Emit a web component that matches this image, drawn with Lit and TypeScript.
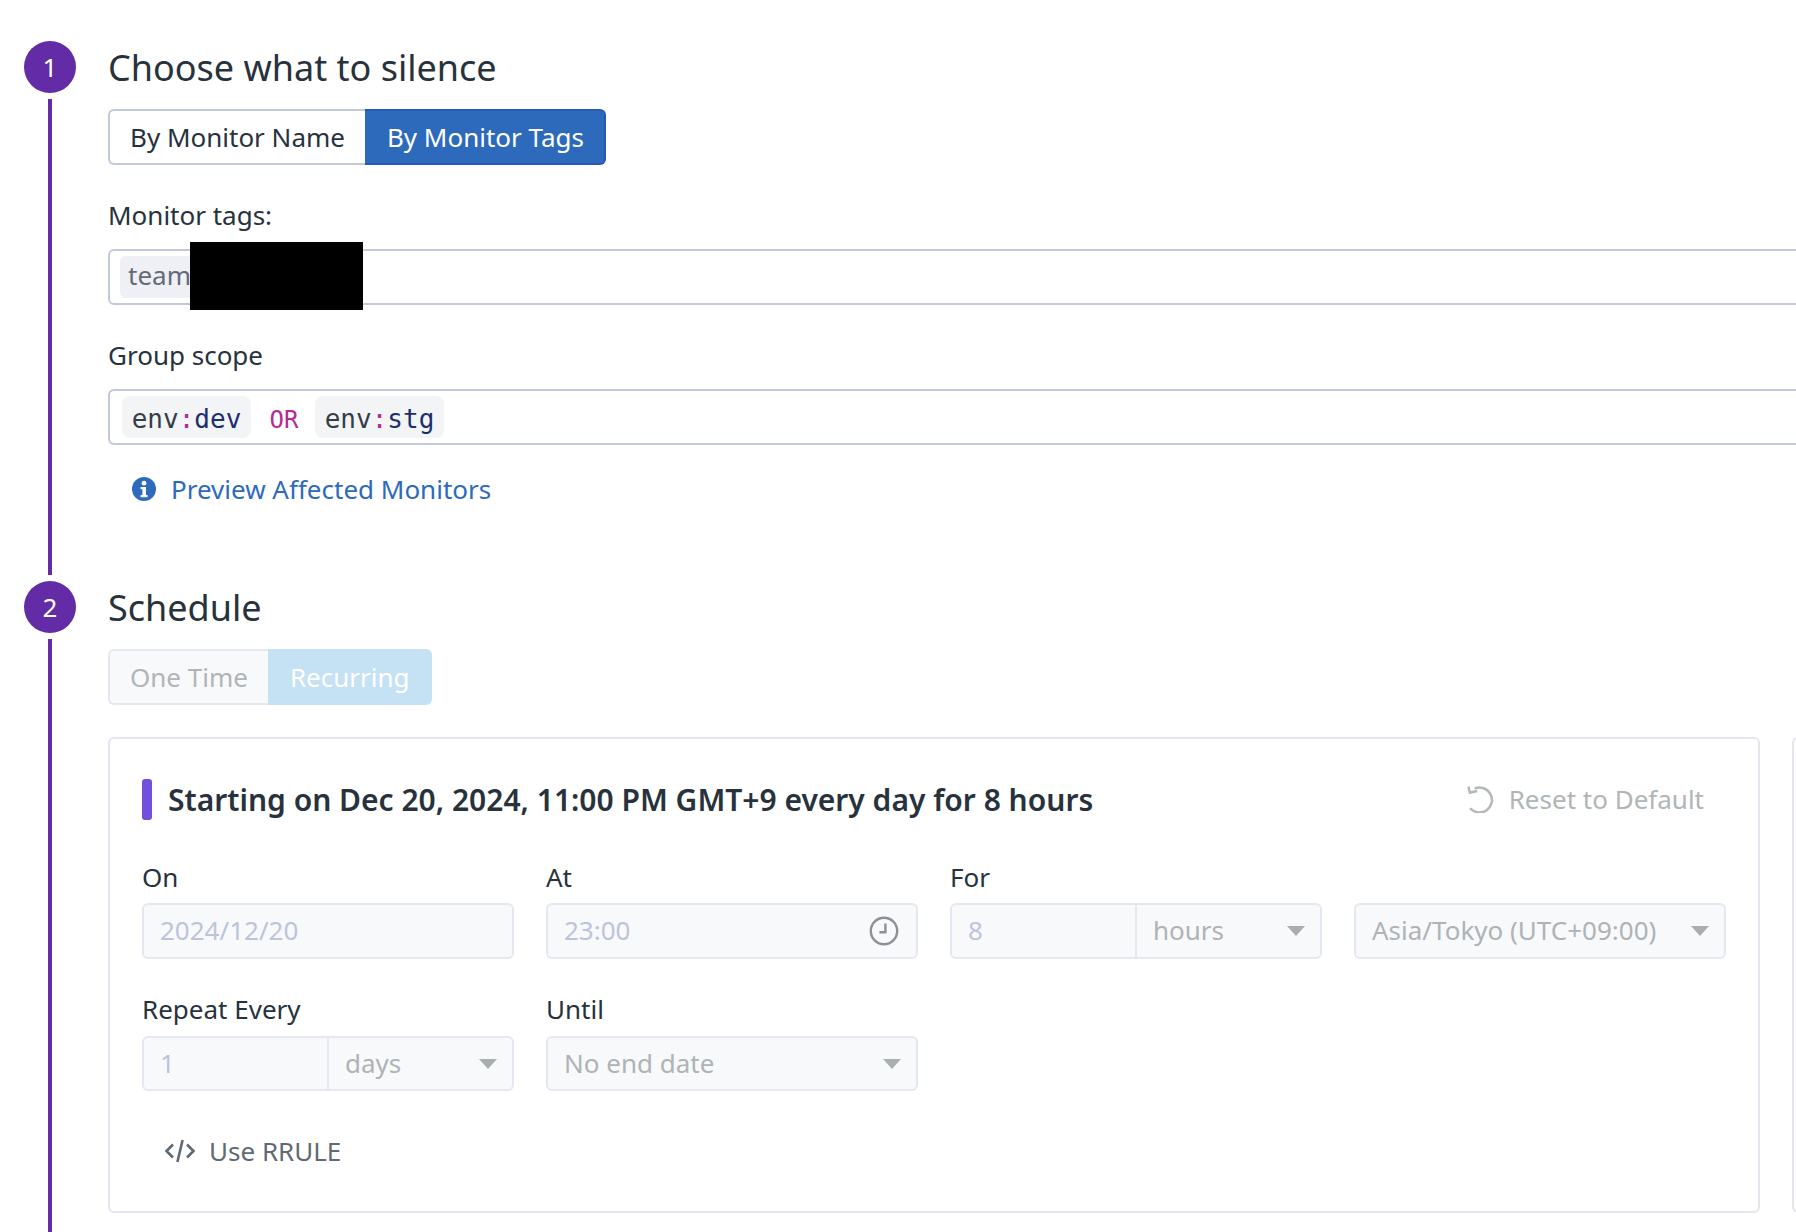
import { LitElement, html, css, svg } from 'lit';
import { customElement } from 'lit/decorators.js';

const caret = html`<svg class="caret" width="18" height="10" viewBox="0 0 18 10"><path d="M0 0h18l-9 10z" fill="#a9aeb1"></path></svg>`;

const infoIcon = svg`<svg class="info" width="24" height="24" viewBox="0 0 24 24">
  <circle cx="12" cy="12" r="12" fill="#2e6bbd"></circle>
  <circle cx="12" cy="6.2" r="2.4" fill="#fff"></circle>
  <path d="M8.6 10h5.4v8h1.6v2.2H8.6V18h1.8v-5.8H8.6z" fill="#fff"></path>
</svg>`;

const resetIcon = svg`<svg class="reset-icon" width="28" height="28" viewBox="0 0 27 27" fill="none" stroke="#b3b8bb" stroke-width="2.4">
  <path d="M7.4 3.4A12 12 0 1 1 3 22.4"></path>
  <path d="M1.4 1.6L2.8 7.4L9.8 5.8"></path>
</svg>`;

const clockIcon = svg`<svg class="clock" width="30" height="30" viewBox="0 0 30 30" fill="none" stroke="#8c9196" stroke-width="2.4">
  <circle cx="15" cy="15" r="13.2"></circle>
  <path d="M16.4 7.6v8.6H10.4"></path>
</svg>`;

const codeIcon = svg`<svg class="code-icon" width="32" height="26" viewBox="0 0 32 26" fill="none" stroke="#5f6a75" stroke-width="2.6">
  <path d="M9 6.5L2.5 13 9 19.5M23 6.5L29.5 13 23 19.5M18.6 2l-5.2 22"></path>
</svg>`;

@customElement('app-root')
export class AppRoot extends LitElement {
  static styles = css`
    :host {
      display: block;
      width: 1796px;
      height: 1232px;
      overflow: hidden;
      background: #fff;
      font-family: "Noto Sans", sans-serif;
      font-size: 26px;
      color: #27323d;
    }
    .step {
      display: flex;
      gap: 32px;
      padding-left: 24px;
    }
    .first {
      padding-top: 41px;
    }
    .rail {
      flex: none;
      width: 52px;
      display: flex;
      flex-direction: column;
      align-items: center;
    }
    .num {
      flex: none;
      width: 52px;
      height: 52px;
      border-radius: 50%;
      background: #632ca6;
      color: #fff;
      font-size: 26px;
      line-height: 52px;
      text-align: center;
    }
    .line {
      flex: 1;
      width: 4px;
      margin: 6px 0;
      background: #632ca6;
    }
    .body {
      flex: none;
      width: 1700px;
    }
    .tall {
      min-height: 700px;
    }
    h2 {
      margin: 0;
      font-size: 36px;
      line-height: 54px;
      font-weight: 400;
      color: #27323d;
    }
    .toggle {
      display: inline-flex;
      vertical-align: top;
      height: 56px;
      margin-top: 14px;
      line-height: 52px;
    }
    .toggle span {
      padding: 0 20px;
      border: 2px solid #c3c8dc;
    }
    .toggle span:first-child {
      border-radius: 6px 0 0 6px;
      border-right: none;
    }
    .toggle span:last-child {
      padding-left: 22px;
      border-radius: 0 6px 6px 0;
      border-left: none;
    }
    .toggle .on {
      background: #2d6abb;
      border-color: #2659b4;
      color: #fff;
    }
    .toggle.off span {
      background: #f8f9fb;
      border-color: #e5e8f0;
      color: #b0b5b8;
    }
    .toggle.off .on {
      background: #c5e1f4;
      border-color: #c5e1f4;
      color: #fff;
    }
    label {
      display: block;
      line-height: 36px;
      color: #27323d;
    }
    .tags-label {
      margin-top: 32px;
    }
    .scope-label {
      margin-top: 32px;
    }
    .field {
      position: relative;
      display: flex;
      align-items: center;
      height: 56px;
      margin-top: 16px;
      padding-left: 10px;
      box-sizing: border-box;
      border: 2px solid #c3c8dc;
      border-radius: 6px;
    }
    .tag {
      height: 42px;
      line-height: 38px;
      padding: 0 8px;
      border-radius: 6px;
      background: #eff0f5;
      color: #626c76;
      width: 170px;
      box-sizing: border-box;
    }
    .redact {
      position: absolute;
      left: 80px;
      top: -9px;
      width: 173px;
      height: 68px;
      background: #000;
    }
    .scope {
      padding-left: 12px;
      font-family: "DejaVu Sans Mono", monospace;
      font-size: 26px;
    }
    .chip {
      height: 42px;
      line-height: 46px;
      width: 129px;
      box-sizing: border-box;
      text-align: center;
      border-radius: 8px;
      background: #f3f4f5;
      color: #333e48;
    }
    .chip i {
      font-style: normal;
      color: #b42a98;
    }
    .chip b {
      font-weight: 400;
      color: #1d2f6f;
    }
    .or {
      width: 64px;
      padding: 5px 0 0 2px;
      box-sizing: border-box;
      font-size: 24px;
      text-align: center;
      color: #b42a98;
    }
    .link {
      display: flex;
      align-items: center;
      gap: 15px;
      margin-top: 26px;
      padding-left: 24px;
      padding-bottom: 74px;
      line-height: 36px;
      color: #2d6abb;
    }
    .panels {
      display: flex;
      gap: 32px;
      margin-top: 32px;
    }
    .panel {
      flex: none;
      width: 1652px;
      height: 476px;
      box-sizing: border-box;
      padding: 40px 32px 0;
      border: 2px solid #e3e6ef;
      border-radius: 6px;
    }
    .heading {
      display: flex;
      align-items: center;
      height: 41px;
    }
    .accent {
      flex: none;
      width: 10px;
      height: 41px;
      margin-right: 16px;
      border-radius: 3px;
      background: #7050dc;
    }
    .summary {
      flex: 1;
      font-size: 30px;
      font-weight: 600;
      color: #27323d;
    }
    .reset {
      display: flex;
      align-items: center;
      gap: 14px;
      margin-right: 22px;
      padding-bottom: 2px;
      color: #b0b5b8;
    }
    .grid {
      display: grid;
      grid-template-columns: repeat(4, 372px);
      column-gap: 32px;
      row-gap: 32px;
      margin-top: 39px;
    }
    .cell label {
      height: 36px;
      margin-bottom: 8px;
    }
    .cell:nth-child(n + 5) label {
      margin-bottom: 9px;
    }
    .cell:nth-child(n + 5) .box {
      height: 55px;
    }
    .box {
      display: flex;
      align-items: center;
      justify-content: space-between;
      height: 56px;
      box-sizing: border-box;
      padding: 0 16px 2px;
      border: 2px solid #e5e8f0;
      border-radius: 6px;
      background: #f8f9fb;
      color: #aeb3b6;
    }
    .hint {
      color: #bcc4dc;
    }
    .clock {
      margin: 2px 1px 0 0;
    }
    .caret {
      margin: 2px -1px 0 0;
    }
    .split {
      padding: 0;
    }
    .split .num-part {
      flex: none;
      width: 185px;
      height: 100%;
      box-sizing: border-box;
      padding-left: 16px;
      line-height: 51px;
      border-right: 2px solid #e5e8f0;
      color: #bcc4dc;
    }
    .split .unit {
      flex: 1;
      display: flex;
      align-items: center;
      justify-content: space-between;
      padding: 0 16px 2px;
    }
    .rrule {
      display: flex;
      align-items: center;
      gap: 13px;
      margin-top: 42px;
      padding-left: 22px;
      line-height: 36px;
      color: #5f6a75;
    }
  `;

  _split(value: string, unit: string) {
    return html`<div class="box split">
      <span class="num-part">${value}</span>
      <span class="unit">${unit}${caret}</span>
    </div>`;
  }

  render() {
    return html`
      <section class="step first">
        <div class="rail"><div class="num">1</div><div class="line"></div></div>
        <div class="body">
          <h2>Choose what to silence</h2>
          <div class="toggle"><span>By Monitor Name</span><span class="on">By Monitor Tags</span></div>
          <label class="tags-label">Monitor tags:</label>
          <div class="field">
            <span class="tag">team</span>
            <div class="redact"></div>
          </div>
          <label class="scope-label">Group scope</label>
          <div class="field scope">
            <span class="chip">env<i>:</i><b>dev</b></span>
            <span class="or">OR</span>
            <span class="chip">env<i>:</i><b>stg</b></span>
          </div>
          <div class="link">${infoIcon}<span>Preview Affected Monitors</span></div>
        </div>
      </section>
      <section class="step">
        <div class="rail"><div class="num">2</div><div class="line"></div></div>
        <div class="body tall">
          <h2>Schedule</h2>
          <div class="toggle off"><span>One Time</span><span class="on">Recurring</span></div>
          <div class="panels">
            <div class="panel">
              <div class="heading">
                <span class="accent"></span>
                <span class="summary">Starting on Dec 20, 2024, 11:00 PM GMT+9 every day for 8 hours</span>
                <span class="reset">${resetIcon}Reset to Default</span>
              </div>
              <div class="grid">
                <div class="cell"><label>On</label><div class="box hint">2024/12/20</div></div>
                <div class="cell"><label>At</label><div class="box hint">23:00${clockIcon}</div></div>
                <div class="cell"><label>For</label>${this._split('8', 'hours')}</div>
                <div class="cell"><label>&nbsp;</label><div class="box">Asia/Tokyo (UTC+09:00)${caret}</div></div>
                <div class="cell"><label>Repeat Every</label>${this._split('1', 'days')}</div>
                <div class="cell"><label>Until</label><div class="box">No end date${caret}</div></div>
              </div>
              <div class="rrule">${codeIcon}<span>Use RRULE</span></div>
            </div>
            <div class="panel"></div>
          </div>
        </div>
      </section>
    `;
  }
}
